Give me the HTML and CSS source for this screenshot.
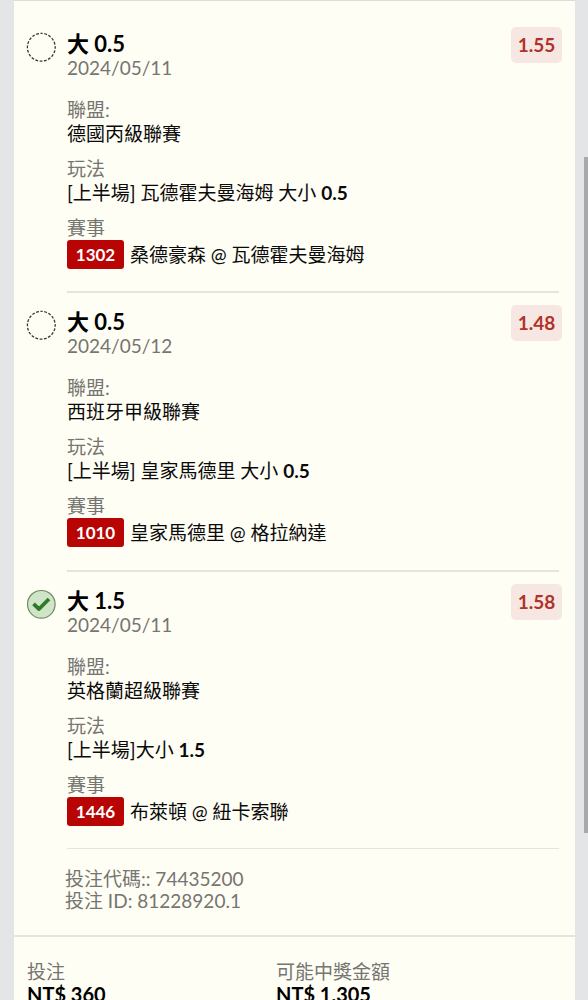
FILE: index.html
```html
<!DOCTYPE html>
<html lang="zh-Hant">
<head>
<meta charset="utf-8">
<meta name="viewport" content="width=device-width, initial-scale=1">
<title>投注</title>
<link rel="stylesheet" href="styles.css">
</head>
<body>
<main class="slip">
  <article class="bet">
    <svg class="status" viewBox="0 0 30 30" role="img" aria-label="未定"><circle cx="15.300" cy="15.300" r="13.900" fill="none" stroke="#3a3535" stroke-width="1.300" stroke-dasharray="2.800 1.567" stroke-dashoffset="1.400" transform="rotate(-90 15.300 15.300)"/></svg>
    <div class="body">
      <header class="head"><h2 class="pick">大 0.5</h2><time class="date">2024/05/11</time><span class="odds">1.55</span></header>
      <dl class="info">
        <div class="row"><dt>聯盟:</dt><dd>德國丙級聯賽</dd></div>
        <div class="row"><dt>玩法</dt><dd>[上半場] 瓦德霍夫曼海姆 大小 <b>0.5</b></dd></div>
        <div class="row"><dt>賽事</dt><dd class="match"><span class="code">1302</span><span>桑德豪森 @ 瓦德霍夫曼海姆</span></dd></div>
      </dl>
    </div>
  </article>
  <article class="bet">
    <svg class="status" viewBox="0 0 30 30" role="img" aria-label="未定"><circle cx="15.300" cy="15.300" r="13.900" fill="none" stroke="#3a3535" stroke-width="1.300" stroke-dasharray="2.800 1.567" stroke-dashoffset="1.400" transform="rotate(-90 15.300 15.300)"/></svg>
    <div class="body">
      <header class="head"><h2 class="pick">大 0.5</h2><time class="date">2024/05/12</time><span class="odds">1.48</span></header>
      <dl class="info">
        <div class="row"><dt>聯盟:</dt><dd>西班牙甲級聯賽</dd></div>
        <div class="row"><dt>玩法</dt><dd>[上半場] 皇家馬德里 大小 <b>0.5</b></dd></div>
        <div class="row"><dt>賽事</dt><dd class="match"><span class="code">1010</span><span>皇家馬德里 @ 格拉納達</span></dd></div>
      </dl>
    </div>
  </article>
  <article class="bet">
    <svg class="status" viewBox="0 0 30 30" role="img" aria-label="贏"><circle cx="15.300" cy="15.300" r="13.800" fill="#d0e4c8" stroke="#6f8a66" stroke-width="1.200"/><path d="M7.500 14.800L13 20L23 10" fill="none" stroke="#2f7a28" stroke-width="3.800" stroke-linejoin="round"/></svg>
    <div class="body">
      <header class="head"><h2 class="pick">大 1.5</h2><time class="date">2024/05/11</time><span class="odds">1.58</span></header>
      <dl class="info">
        <div class="row"><dt>聯盟:</dt><dd>英格蘭超級聯賽</dd></div>
        <div class="row"><dt>玩法</dt><dd>[上半場]大小 <b>1.5</b></dd></div>
        <div class="row"><dt>賽事</dt><dd class="match"><span class="code">1446</span><span>布萊頓 @ 紐卡索聯</span></dd></div>
      </dl>
    </div>
  </article>
  <section class="ids">
    <p>投注代碼:: 74435200</p>
    <p>投注 ID: 81228920.1</p>
  </section>
  <footer class="totals">
    <div><p class="label">投注</p><p class="sum">NT$ 360</p></div>
    <div><p class="label">可能中獎金額</p><p class="sum">NT$ 1,305</p></div>
  </footer>
</main>
<div class="scroll"></div>
</body>
</html>
```
FILE: styles.css
```css
* { box-sizing: border-box; margin: 0; padding: 0; }
html { height: 100%; overflow: hidden; }
body {
  height: 100%;
  overflow: hidden;
  background: #e4e5e7;
  color: #0a0a0a;
  font: 19px/24px Lato, "Noto Sans CJK TC", sans-serif;
}
.slip {
  margin: 0 13px 0 14px;
  min-height: 100%;
  padding-top: 14px;
  background: #fffef5;
  border-top: 1px solid #dcdcd8;
}
.bet { display: flex; gap: 11px; padding: 0 16px 0 12px; }
.status { flex: none; width: 30px; height: 30px; margin-top: 17px; }
.body {
  flex: 1;
  padding: 17px 0 22px;
  border-bottom: 2px solid #e6e4dd;
}
.bet:nth-of-type(3) .body { border-bottom-width: 1px; }
.head {
  display: grid;
  grid-template-columns: 1fr auto;
  margin-bottom: 19px;
}
.pick { font-size: 22px; line-height: 24px; font-weight: 700; color: #000; }
.date { grid-row: 2; line-height: 23px; color: #757571; }
.odds {
  grid-column: 2;
  grid-row: 1 / 3;
  align-self: start;
  width: 51px;
  margin-right: -3px;
  margin-top: -5px;
  border-radius: 5px;
  background: #f7e7e2;
  color: #b0322b;
  font-weight: 700;
  line-height: 36px;
  text-align: center;
}
.info { display: grid; gap: 11px; }
.row dt { color: #757571; }
.match { display: flex; align-items: center; gap: 6px; }
.code {
  width: 57px;
  border-radius: 3px;
  background: #b90404;
  color: #fff;
  font-size: 17px;
  font-weight: 700;
  line-height: 29px;
  text-align: center;
}
.bet:nth-of-type(2) .body { padding-bottom: 23px; }
.ids { padding: 19px 51px 23px; line-height: 22px; color: #757571; }
.totals {
  display: grid;
  grid-template-columns: 249px 1fr;
  padding: 24px 13px 0;
  border-top: 2px solid #e6e4dd;
  line-height: 22px;
}
.label { color: #757571; }
.sum { font-size: 20px; font-weight: 700; color: #000; }
.scroll {
  position: absolute;
  top: 157px;
  right: 0;
  width: 4px;
  height: 676px;
  background: #a9a9ab;
}
```
